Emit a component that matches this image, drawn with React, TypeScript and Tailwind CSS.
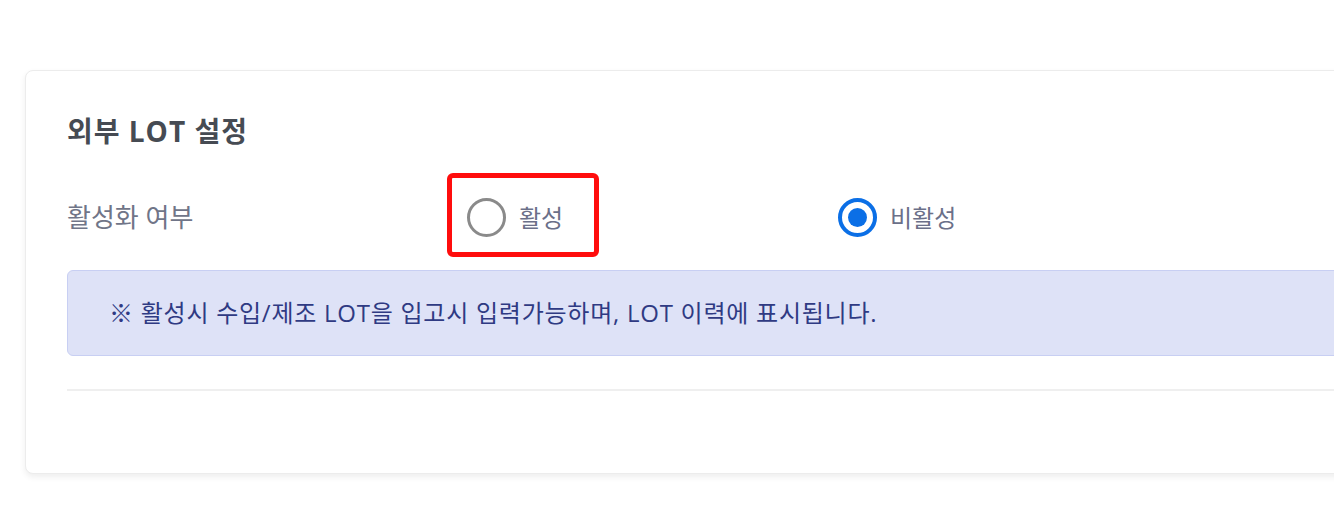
import React from "react"

const font = { fontFamily: '"Open Sans", "Noto Sans CJK KR", sans-serif' }

function Radio({ checked }: { checked: boolean }) {
  return checked ? (
    <span className="flex h-[39px] w-[39px] shrink-0 items-center justify-center rounded-full border-[4px] border-[#0b6fe6]">
      <span className="h-[19px] w-[19px] rounded-full bg-[#0b6fe6]" />
    </span>
  ) : (
    <span className="h-[39px] w-[39px] shrink-0 rounded-full border-[3.5px] border-[#8a8a8a]" />
  )
}

export default function App() {
  const [active, setActive] = React.useState(false)

  return (
    <div className="w-full overflow-hidden bg-white" style={font}>
      <div className="h-[530px] pl-[25px] pt-[70px]">
        <section className="w-[1400px] rounded-lg border border-[#ececec] bg-white pl-[41px] pt-[38px] pb-[82px] shadow-[0_3px_6px_rgba(0,0,0,0.07)]">
          <h3 className="text-[28px] font-bold leading-[44px] tracking-[1px] text-[#464b53]">외부 LOT 설정</h3>

          <div className="mt-[20px] flex items-center">
            <div className="w-[380px] pt-[5px] text-[26px] text-[#707588]">활성화 여부</div>

            {/* 강조 표시된 옵션 */}
            <label
              onClick={() => setActive(true)}
              className="flex h-[84px] w-[152px] cursor-pointer items-center gap-[13px] rounded-md border-[5px] border-[#ff0d0d] pl-[15px] pt-[5px]"
            >
              <Radio checked={active} />
              <span className="text-[24px] text-[#6b7089]">활성</span>
            </label>

            <label
              onClick={() => setActive(false)}
              className="ml-[239px] flex cursor-pointer items-center gap-[13px] pt-[5px]"
            >
              <Radio checked={!active} />
              <span className="text-[24px] text-[#6b7089]">비활성</span>
            </label>
          </div>

          <div className="mt-[13px] flex h-[86px] items-center rounded-md border border-[#c8cff3] bg-[#dee2f7] pl-[41px] text-[24px] tracking-[0.75px] text-[#2f3a83]">
            ※ 활성시 수입/제조 LOT을 입고시 입력가능하며, LOT 이력에 표시됩니다.
          </div>

          <div className="mt-[33px] h-[2px] bg-[#efefef]" />
        </section>
      </div>
    </div>
  )
}
